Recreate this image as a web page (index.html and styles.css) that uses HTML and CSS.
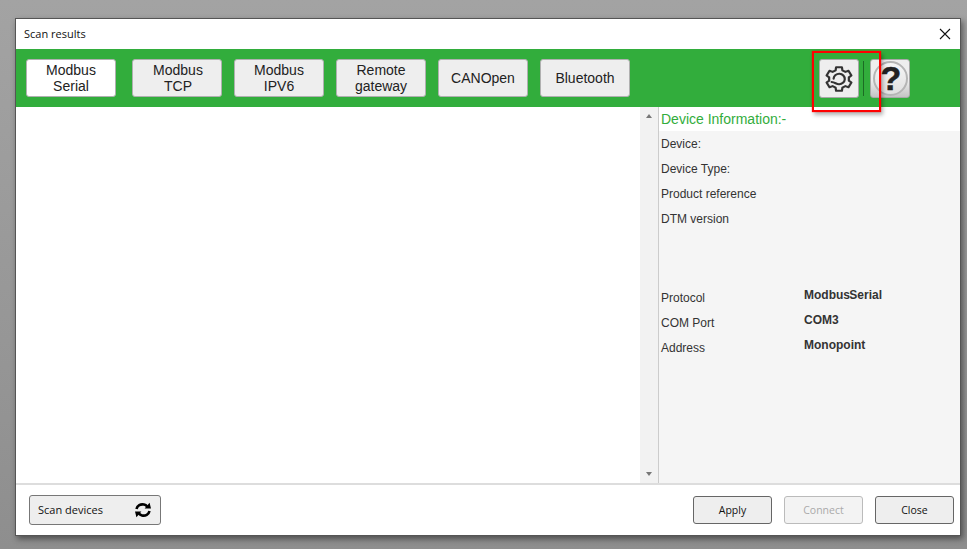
FILE: index.html
```html
<!doctype html>
<html lang="en">
<head>
    <meta charset="UTF-8">
    <title>Scan results</title>
    <link rel="stylesheet" href="styles.css">
</head>
<body>

<div class="dialog">
    <div class="title-bar">
        <span class="title">Scan results</span>
        <svg class="close-x" width="12" height="12" viewBox="0 0 12 12">
            <path d="M1 1L11 11M11 1L1 11" stroke="#111" stroke-width="1.1" fill="none"/>
        </svg>
    </div>

    <div class="toolbar">
        <button class="tab active">Modbus<br>Serial</button>
        <button class="tab first-gap">Modbus<br>TCP</button>
        <button class="tab">Modbus<br>IPV6</button>
        <button class="tab">Remote<br>gateway</button>
        <button class="tab">CANOpen</button>
        <button class="tab">Bluetooth</button>

        <div class="tool-group">
            <button class="tool-btn">
                <svg width="28" height="26" viewBox="0 0 28 28" preserveAspectRatio="none">
                    <path d="M11.1 1.3H16.9L17.4 4.6L20.4 6.3L23.5 5.1L26.4 10.2L23.85 12.26V15.74L26.4 17.8L23.5 22.9L20.4 21.7L17.4 23.4L16.9 26.7H11.1L10.6 23.4L7.6 21.7L4.5 22.9L1.6 17.8L4.15 15.74V12.26L1.6 10.2L4.5 5.1L7.6 6.3L10.6 4.6Z" fill="none" stroke="#333" stroke-width="2.2" stroke-linejoin="round"/>
                    <path d="M8.6 13.6A5.6 5.6 0 1 1 14 19.6C11.4 19.6 10 17.6 6.6 17.2" fill="none" stroke="#333" stroke-width="2.2" stroke-linecap="round"/>
                </svg>
            </button>
            <span class="tool-sep"></span>
            <button class="tool-btn help-btn"><span class="help-mark">?</span></button>
        </div>

        <div class="highlight"></div>
    </div>

    <div class="main">
        <div class="list-area"></div>
        <div class="scrollbar">
            <span class="arrow-up"></span>
            <span class="arrow-down"></span>
        </div>
        <div class="info-panel">
            <div class="info-head">Device Information:-</div>
            <div class="info-rows">
                <div class="info-row">Device:</div>
                <div class="info-row">Device Type:</div>
                <div class="info-row">Product reference</div>
                <div class="info-row">DTM version</div>
            </div>
            <div class="info-rows conn-rows">
                <div class="info-row"><span>Protocol</span><b class="serial">Modbus Serial</b></div>
                <div class="info-row"><span>COM Port</span><b>COM3</b></div>
                <div class="info-row"><span>Address</span><b>Monopoint</b></div>
            </div>
        </div>
    </div>

    <div class="footer">
        <button class="scan-btn">
            <span class="scan-label">Scan devices</span>
            <svg width="18" height="18" viewBox="0 0 18 18">
                <path d="M2.5 8C3.2 4.6 6.6 2.8 10 3.6C11.4 3.9 12.4 4.6 13.2 5.6" fill="none" stroke="#000" stroke-width="2.6"/>
                <path d="M10.6 7.4L17 7.6L15.6 1.8Z" fill="#000"/>
                <path d="M15.5 10C14.8 13.4 11.4 15.2 8 14.4C6.6 14.1 5.6 13.4 4.8 12.4" fill="none" stroke="#000" stroke-width="2.6"/>
                <path d="M7.4 10.6L1 10.4L2.4 16.2Z" fill="#000"/>
            </svg>
        </button>
        <div class="footer-right">
            <button class="foot-btn">Apply</button>
            <button class="foot-btn" disabled>Connect</button>
            <button class="foot-btn">Close</button>
        </div>
    </div>
</div>

</body>
</html>
```

FILE: styles.css
```css
html, body {
    margin: 0;
    height: 100%;
}

body {
    font-family: "Liberation Sans", Arial, sans-serif;
    background: linear-gradient(#a3a3a3, #8e8e8e);
    overflow: hidden;
}

button {
    font-family: inherit;
    padding: 0;
    margin: 0;
}

.dialog {
    box-sizing: border-box;
    width: 946px;
    height: 518px;
    margin: 18px 0 0 15px;
    border: 1px solid #555;
    background: #fff;
    box-shadow: 2px 3px 6px rgba(0, 0, 0, 0.45);
    display: flex;
    flex-direction: column;
}

.title-bar {
    height: 30px;
    display: flex;
    align-items: center;
    justify-content: space-between;
    padding: 0 9px 0 8px;
}

.title {
    font-family: "Open Sans", sans-serif;
    font-size: 11px;
    color: #111;
    padding-bottom: 2px;
}

.toolbar {
    height: 58px;
    background: #32ad3c;
    display: flex;
    align-items: flex-start;
    padding: 10px 0 0 10px;
    box-sizing: border-box;
    position: relative;
}

.tab {
    width: 90px;
    height: 38px;
    margin-right: 12px;
    font-size: 14px;
    line-height: 16px;
    color: #222;
    background: #eee;
    border: 1px solid #b0b0b0;
    border-radius: 3px;
}

.tab.active {
    background: #fff;
    margin-right: 16px;
}

.tab.first-gap {
    padding-left: 2px;
}

.tool-group {
    display: flex;
    align-items: center;
    margin-left: 177px;
}

.tool-btn {
    box-sizing: border-box;
    width: 40px;
    height: 39px;
    background: #eee;
    border: 1px solid #a8a8a8;
    border-radius: 3px;
    display: flex;
    align-items: center;
    justify-content: center;
}

.tool-sep {
    width: 1px;
    height: 35px;
    background: #1c6b24;
    margin: 0 6px 0 4px;
}

.help-btn {
    background: linear-gradient(#eee 55%, #c4c4c4);
}

.help-mark {
    box-sizing: border-box;
    width: 35px;
    height: 35px;
    border: 2px solid #b5b5b5;
    border-radius: 50%;
    background: linear-gradient(#f6f6f6, #e0e0e0);
    font-size: 34px;
    font-weight: bold;
    line-height: 31px;
    text-align: center;
    text-indent: 2px;
    color: #222;
    -webkit-text-stroke: 0.5px #222;
}

/* the red marker drawn over the screenshot */
.highlight {
    position: absolute;
    left: 796px;
    top: 2px;
    width: 69px;
    height: 61px;
    box-sizing: border-box;
    border: 2px solid #f00;
    box-shadow: 0 0 1px rgba(255, 0, 0, 0.8), 2px 3px 4px rgba(0, 0, 0, 0.3);
}

.main {
    height: 376px;
    display: flex;
    border-bottom: 2px solid #ddd;
}

.list-area {
    width: 624px;
}

.scrollbar {
    width: 18px;
    background: #f2f2f2;
    display: flex;
    flex-direction: column;
    justify-content: space-between;
    align-items: center;
    padding: 7px 0;
    box-sizing: border-box;
}

.arrow-up, .arrow-down {
    width: 0;
    height: 0;
    border-left: 3px solid transparent;
    border-right: 3px solid transparent;
}

.arrow-up {
    border-bottom: 4px solid #777;
}

.arrow-down {
    border-top: 4px solid #777;
}

.info-panel {
    flex: 1;
    background: #f5f5f5;
    border-left: 1px solid #ccc;
    font-size: 12px;
    color: #333;
}

.info-head {
    height: 24px;
    line-height: 24px;
    background: #fff;
    padding-left: 2px;
    font-size: 14px;
    color: #32ad3c;
}

.info-rows {
    padding-left: 2px;
}

.conn-rows {
    margin-top: 54px;
}

.info-row {
    height: 25px;
    display: flex;
    align-items: center;
}

.info-row span {
    width: 143px;
}

.info-row b {
    padding-bottom: 6px;
    color: #333;
}

.info-row b.serial {
    word-spacing: -4px;
}

.footer {
    flex: 1;
    display: flex;
    align-items: center;
    justify-content: space-between;
    padding: 0 6px 0 13px;
}

.scan-btn {
    box-sizing: border-box;
    width: 132px;
    height: 30px;
    background: #eee;
    border: 1px solid #777;
    border-radius: 3px;
    display: flex;
    align-items: center;
    justify-content: space-between;
    padding: 0 8px;
    font-family: "Open Sans", sans-serif;
    font-size: 11px;
    color: #111;
}

.scan-label {
    padding-bottom: 2px;
}

.footer-right {
    display: flex;
    gap: 12px;
}

.foot-btn {
    width: 79px;
    height: 28px;
    background: #eee;
    border: 1px solid #666;
    border-radius: 3px;
    font-family: "Open Sans", sans-serif;
    font-size: 10.5px;
    color: #111;
}

.foot-btn:disabled {
    background: #f3f3f3;
    border-color: #bbb;
    color: #aaa;
}
```
